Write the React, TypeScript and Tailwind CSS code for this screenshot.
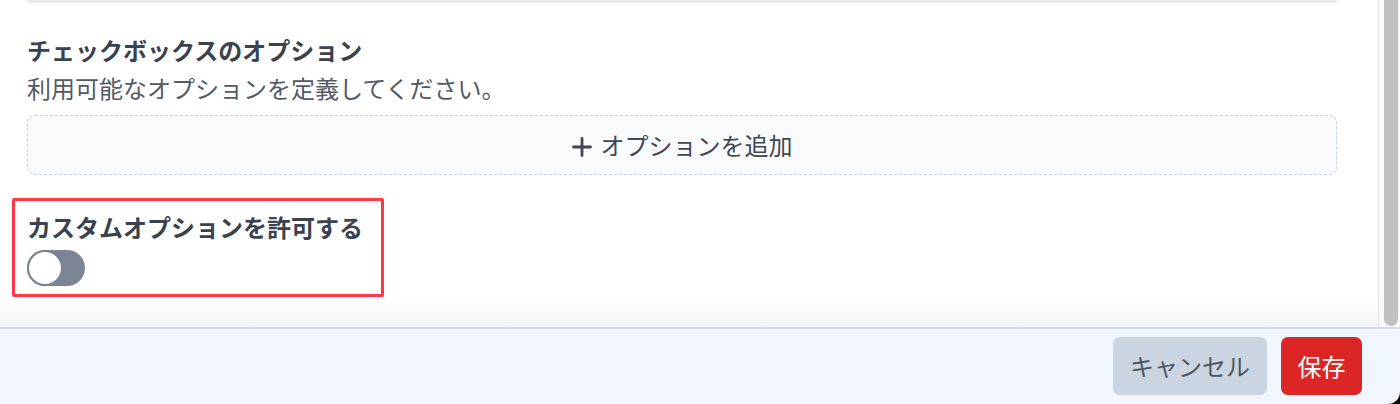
export default function App() {
  return (
    <div
      className="flex h-[404px] w-[1400px] flex-col overflow-hidden bg-white"
      style={{ fontFamily: '"Noto Sans CJK JP", "Noto Sans", sans-serif' }}
    >
      <div className="flex min-h-0 flex-1">
        <div className="relative flex-1">
          <div className="ml-[27px] mr-[41px] h-[3px] bg-[#ececec]" />
          <div className="px-[27px] pr-[41px] pt-[29px]">
            <h3 className="text-[24px] leading-[36px] font-bold text-[#3a424e]">
              チェックボックスのオプション
            </h3>
            <p className="mt-[4px] text-[24px] leading-[32px] text-[#525a66]">
              利用可能なオプションを定義してください。
            </p>
            <button className="mt-[11px] flex h-[60px] w-full items-center justify-center gap-[9px] rounded-[8px] border border-dashed border-[#c9d2e0] bg-[#f8fafc] text-[24px] text-[#3f4753]">
              <svg width="20" height="20" viewBox="0 0 20 20" className="mt-[4px]">
                <path d="M10 1.5v17M1.5 10h17" stroke="#3f4753" strokeWidth="2.8" strokeLinecap="round" />
              </svg>
              オプションを追加
            </button>
          </div>
          <div className="mt-[23px] ml-[12px] w-[372px] rounded-[2px] border-[3px] border-[#fb3749] pb-[8px] pl-[12px] pt-[8px]">
            <div className="text-[24px] leading-[36px] font-bold text-[#3a424e]">
              カスタムオプションを許可する
            </div>
            <div className="mt-[5px] flex h-[36px] w-[58px] items-center rounded-full bg-[#7b8593]">
              <div className="h-[36px] w-[36px] rounded-full border-[2px] border-[#7b8593] bg-white" />
            </div>
          </div>
          <div className="absolute bottom-0 left-0 right-0 h-[28px] bg-gradient-to-b from-white to-[#f3f4f6]" />
        </div>
        <div className="flex w-[22px] border-l border-[#e6e6e6] bg-[#fafafa] pl-[5px] pr-[2px]">
          <div className="h-[326px] w-full rounded-b-full bg-[#c1c1c1]" />
        </div>
      </div>
      <div className="relative flex h-[77px] justify-end gap-[14px] border-t-2 border-[#d3dceb] bg-[#f1f5fd] pr-[38px] pt-[8px]">
        <button className="h-[58px] w-[154px] rounded-[7px] bg-[#cbd5e1] text-[24px] text-[#4b5563]">
          キャンセル
        </button>
        <button className="h-[58px] w-[81px] rounded-[7px] bg-[#dc2626] text-[24px] text-white">
          保存
        </button>
        <div className="absolute bottom-0 right-0 h-[12px] w-[16px] bg-black">
          <div className="h-full w-full rounded-br-[16px] bg-[#f1f5fd]" />
        </div>
      </div>
    </div>
  )
}
